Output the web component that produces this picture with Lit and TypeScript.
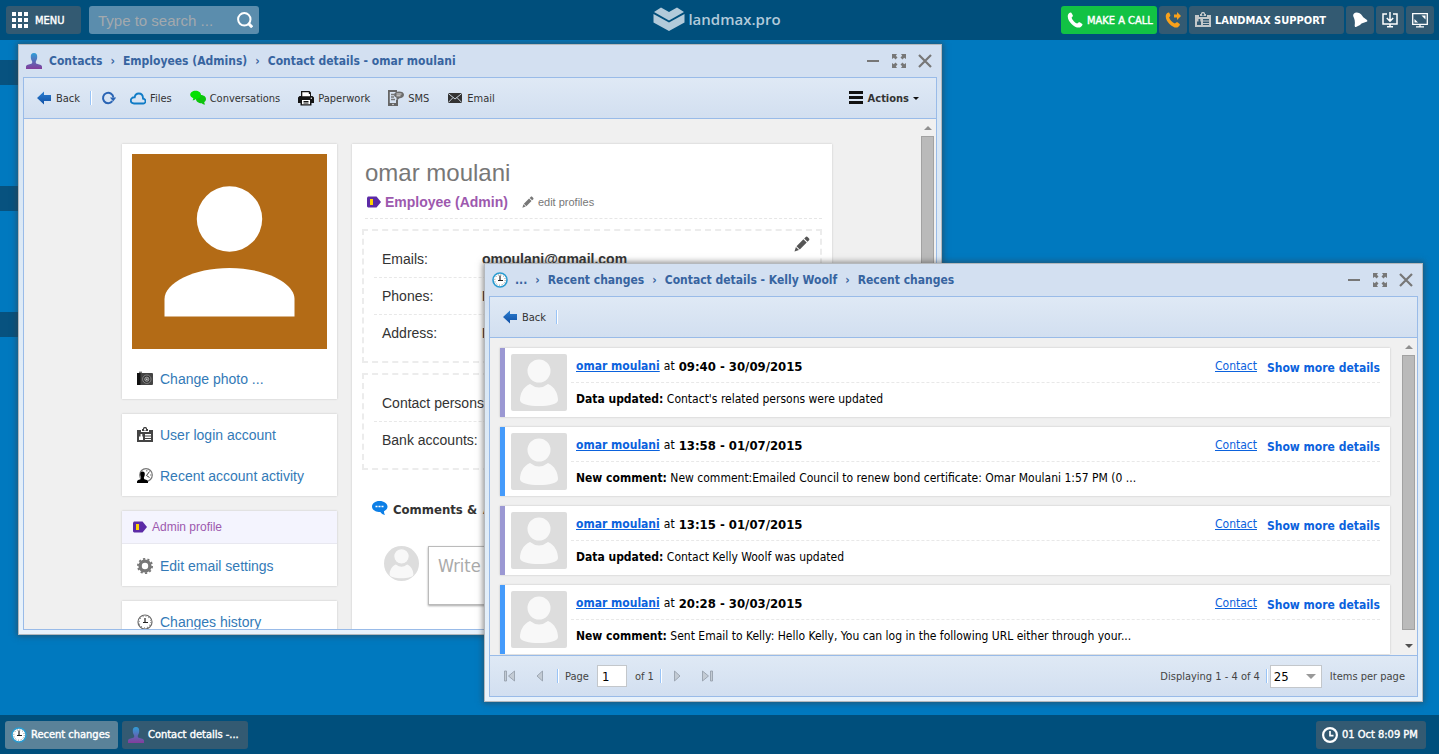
import { LitElement, html, css, svg, nothing } from "lit";
import { customElement, property } from "lit/decorators.js";

const icons: Record<string, unknown> = {
  grid: svg`<g fill="#fff"><path d="M0 0h4v4H0zM6 0h4v4H6zM12 0h4v4h-4zM0 6h4v4H0zM6 6h4v4H6zM12 6h4v4h-4zM0 12h4v4H0zM6 12h4v4H6zM12 12h4v4h-4z"/></g>`,
  search: svg`<g fill="none" stroke="#fff"><circle cx="7.3" cy="7.3" r="6.2" stroke-width="2"/><path d="M11.6 11.6l3.6 3.6" stroke-width="3"/></g>`,
  phone: svg`<path fill="#fff" d="M1 2.8C2 .8 3.4 0 4.3.7l1.5 2.6c.3.9-.6 1.7-1.2 2.2.6 2.5 3.3 5.4 5.7 6 .7-.8 1.700-1.600 2.500-1.200l2.500 1.700c.7.9-.6 2.800-2.300 3.400C8 16.800-.8 8.500 1 2.800z"/>`,
  forward: svg`<g fill="#f9a11b"><path d="M1 2.8C2 .8 3.400 0 4.300.7l1 2.400c.3.9-.6 1.700-1.200 2.200.6 2.800 3.100 5.400 5.900 6.200.7-.8 1.700-1.600 2.500-1.200l2.200 1.700c.7.9-.6 2.800-2.300 3.400C8 16.800-.8 8.500 1 2.800z"/><path d="M9 2.500h3V0l4 4-4 4V5.500H9z"/></g>`,
  badge: svg`<path fill="currentColor" fill-rule="evenodd" d="M0 3h5V2h1V1l1-1h2l1 1v1h1v1h5v12H0zM7 1.500v2h2v-2zM4 3v2h8V3h-1v1H5V3zM3.500 7h1.800v2.500H6V13H2V9.500h1.500zM8 7v1.500h6V7zM8 9.500V11h6V9.500zM8 12v1h6v-1z"/>`,
  bell: svg`<path fill="#fff" d="M2 1.500C4-.5 8.500 1 10 3.500c1.500 2.600 4 3.500 5 4.500.5.8.5 1.400-.5 1.700L9.500 11.500 8 13l-4 2c-1 .4-1.300-.5-1.300-1.500.3-3 .3-5-.7-7.500C1 4 .7 2.800 2 1.500z"/>`,
  download: svg`<path fill="none" stroke="#fff" stroke-width="1.500" d="M5 2H1v10h14V2h-4M8 0v9M4.800 6L8 9.200 11.200 6M8 12v3M5 14.800h6"/>`,
  screen: svg`<g stroke="#fff" stroke-width="1.300" fill="none"><path d="M.7 1.700h14.600v10.600H.7zM8 12v2.500M4 14.800h8"/></g><path fill="#fff" d="M9.500 3.500h4v4zM2.500 7v3.500H6z"/>`,
  person: svg`<linearGradient id="pg" x1="0" y1="0" x2="0" y2="1"><stop offset="0" stop-color="#2f9ed8"/><stop offset="1" stop-color="#843c9b"/></linearGradient><path fill="url(#pg)" d="M8 0c2.300 0 3.300 1.500 3.200 3.700 0 2-.5 3.300-1.200 4.300-.5 1.500-.2 2.400.8 2.800 2 .7 5.200 1 5.200 3V16H0v-2.200c0-2 3.200-2.300 5.200-3 1-.4 1.300-1.300.8-2.800-.7-1-1.200-2.300-1.200-4.300C4.700 1.500 5.700 0 8 0z"/>`,
  clock: svg`<circle cx="8" cy="8" r="7" fill="#fff" stroke="#2a9bd0" stroke-width="1.600"/><circle cx="8" cy="8" r="5.200" fill="none" stroke="#666" stroke-width="1" stroke-dasharray=".8 1.920"/><path d="M8 3.500V8.500M6 8.500H11" stroke="#222" stroke-width="1.200" fill="none"/>`,
  history: svg`<circle cx="8" cy="8" r="7" fill="#fff" stroke="#6b6b6b" stroke-width="1.200"/><circle cx="8" cy="8" r="5.800" fill="none" stroke="#777" stroke-width="1.200" stroke-dasharray=".8 2.230"/><path d="M8 4V8.500M6 8.500H11" stroke="#222" stroke-width="1.200" fill="none"/>`,
  time: svg`<circle cx="8" cy="8" r="6.900" fill="none" stroke="#fff" stroke-width="2.200"/><path d="M8 4v4.700h3.500" stroke="#fff" stroke-width="1.700" fill="none"/>`,
  minus: svg`<path d="M2 8h12" stroke="#777" stroke-width="2"/>`,
  expand: svg`<path fill="#777" d="M1 1h5L4.800 2.800 6.500 4.500 4.500 6.500 2.800 4.800 1 6zM15 1v5l-1.800-1.200L11.500 6.500l-2-2 1.700-1.700L10 1zM1 15v-5l1.800 1.200 1.700-1.700 2 2-1.700 1.700L6 15zM15 15h-5l1.200-1.800-1.700-1.700 2-2 1.700 1.700L15 10z"/>`,
  close: svg`<path d="M2 2l12 12M14 2L2 14" stroke="#777" stroke-width="2.200"/>`,
  back: svg`<linearGradient id="bk" x1="0" y1="0" x2="0" y2="1"><stop offset="0" stop-color="#2d7fd0"/><stop offset="1" stop-color="#0f4fa5"/></linearGradient><path fill="url(#bk)" d="M1 8l7-6.500V5h7v6H8v3.500z"/>`,
  refresh: svg`<path d="M12.300 11.200A5.200 5.200 0 1 1 13.400 7.500" fill="none" stroke="#2a64b4" stroke-width="2"/><path d="M10 7.500h6.200l-3 4z" fill="#2a64b4"/>`,
  cloud: svg`<path d="M4 13.500h9a2.300 2.300 0 0 0 1.500-4.200c-.5-.5-1.200-.8-1.500-.8 0-3-1.800-5-4.300-5C6.500 3.500 5 5 4.700 7.300 2.500 7 .8 8.600.8 10.500c0 1.800 1.400 3 3.200 3z" fill="none" stroke="#0f7bc6" stroke-width="1.800"/>`,
  chat: svg`<path fill="#0cc40c" d="M10.500 5c3.200 0 5.500 1.600 5.500 4 0 1.500-.8 2.500-1.800 3.200.1 1 .5 1.800 1 2.300-1.500 0-2.800-.5-3.500-1.300-3.300 0-5.700-1.600-5.700-4.200 0-2.400 1.800-4 4.500-4z"/><path fill="#04e004" d="M5.500.8c3.200 0 5.500 1.700 5.500 4s-2.300 4.200-5 4.200c-.9 1-2.200 1.300-3.500 1.300.5-.5.8-1.200.8-2C1.500 7.500.2 6.400.2 4.800.2 2.500 2.500.8 5.500.8z"/>`,
  printer: svg`<path fill="#151515" d="M3 1h8.500L13 2.500V6h1.500L16 7.500V13h-2.500v2.500h-11V13H0V7.500L1.500 6H3z"/><path fill="#fff" d="M4.300 2.300h6.500V4H12v2.300H4.300zM4 10h8v4.300H4z"/><path stroke="#151515" d="M5.500 11.500h5M5.500 13h5"/><circle cx="13.300" cy="8.200" r=".7" fill="#fff"/>`,
  sms: svg`<path fill="#666" fill-rule="evenodd" d="M0 0h9v2H1.800v11H8v-3h2v6H0z"/><path d="M3 4.500h3M3 7h3M3 9.500h4" stroke="#777" stroke-width="1.400"/><circle cx="5" cy="14.500" r=".7" fill="#fff"/><path fill="#6c6c6c" d="M11 1.500c3 0 5 1.200 5 3.300C16 7 14 8.300 11.500 8.300L8.500 11V7.700C7 7 6 6.300 6 4.800c0-2 2-3.300 5-3.300z"/><path d="M8.500 4h5M8.500 5.800h4" stroke="#fff" stroke-width=".8"/>`,
  mail: svg`<path fill="#333" d="M1 3h14v10H1z"/><path d="M1.200 3.400L8 9l6.800-5.600M1.200 12.600L6 7.600M14.800 12.600L10 7.600" fill="none" stroke="#dde7f3" stroke-width=".9"/>`,
  bars: svg`<path stroke="#111" stroke-width="3" d="M1 2.500h14M1 7.500h14M1 12.500h14"/>`,
  camera: svg`<rect x="0" y="2" width="16" height="12" rx="1" fill="#444"/><rect x="0" y="2" width="3.500" height="12" fill="#111"/><path d="M2 1.300h3" stroke="#777" stroke-width="1.400"/><circle cx="9.800" cy="8.200" r="4.200" fill="#333" stroke="#999" stroke-width=".8"/><circle cx="9.800" cy="8.200" r="2.100" fill="#555" stroke="#bbb" stroke-width=".8"/><circle cx="9.800" cy="8.200" r=".8" fill="#ddd"/>`,
  activity: svg`<circle cx="9" cy="7" r="6.300" fill="#fff" stroke="#777" stroke-width="1.200"/><path d="M12.500 3.500L9.500 7.500l3 2" stroke="#444" fill="none"/><path d="M9.800 2v1.500M14.500 7H13" stroke="#777"/><path fill="#000" d="M5.500 3.500c1.700 0 2.400 1 2.300 2.700 0 1.300-.4 2.300-.9 3 0 1.500.2 2 1.200 2.400 1.500.5 2.900.9 2.900 2.200V15H0v-1.200c0-1.300 1.400-1.700 2.900-2.200 1-.4 1.200-.9 1.200-2.400-.5-.7-.9-1.700-.9-3 0-1.700.6-2.700 2.300-2.700z"/>`,
  tag: svg`<path fill="#5c2ba6" d="M2 2.500h8.500L15 8l-4.500 5.500H2L1 12.500v-9z"/><path fill="#ffd500" d="M4 5h3v6H4z"/>`,
  gear: svg`<circle cx="8" cy="8" r="4.900" fill="none" stroke="#777" stroke-width="3.400"/><circle cx="8" cy="8" r="7.100" fill="none" stroke="#777" stroke-width="1.800" stroke-dasharray="2.230 2.230"/>`,
  pencil: svg`<path fill="currentColor" d="M11.500 1.200c.8-.8 1.500-.8 2.300 0l1 1c.8.8.8 1.500 0 2.300l-1.300 1.300-3.300-3.300zM9.400 3.300l3.300 3.300-6.900 6.900-3.300-3.300zM1.900 11l3.100 3.100L.5 15.500z"/>`,
  comments: svg`<path fill="#0d7fe6" d="M7.500 1C12 1 15.500 3.500 15.500 6.500c0 2.200-1.400 3.700-3.500 4.700-.1 1.500.3 2.700 1 3.700-2.200-.3-3.700-1.300-4.700-2.900C3.500 12 0 9.800 0 6.500c0-3 3-5.500 7.500-5.500z"/><path stroke="#fff" stroke-width="1.300" stroke-dasharray="2 1" d="M3.500 6.500h8.500"/>`,
  first: svg`<path fill="#c3cbd4" stroke="#919ba7" stroke-width=".8" d="M2.500 3h2v10h-2zM12.500 3v10L6.500 8z"/>`,
  prev: svg`<path fill="#c3cbd4" stroke="#919ba7" stroke-width=".8" d="M10.500 3v10L5 8z"/>`,
  next: svg`<path fill="#c3cbd4" stroke="#919ba7" stroke-width=".8" d="M5.500 3v10L11 8z"/>`,
  last: svg`<path fill="#c3cbd4" stroke="#919ba7" stroke-width=".8" d="M3.500 3v10l6-5zM11.500 3h2v10h-2z"/>`,
};

const icon = (name: string, cls = "") =>
  html`<svg class="icon ${cls}" viewBox="0 0 16 16" aria-hidden="true">${icons[name]}</svg>`;

const silhouette = html`<svg class="avatar" viewBox="0 0 56 57" preserveAspectRatio="xMidYMid slice" aria-hidden="true">
  <rect width="56" height="57" fill="#ddd" />
  <path d="M19 30q9 7 18 0c7 3 10 10 10 16 0 4-9 6-19 6s-19-2-19-6c0-6 3-13 10-16z" fill="#f8f8f8" />
  <circle cx="28" cy="17" r="12.500" fill="#f8f8f8" stroke="#ddd" stroke-width="2" />
</svg>`;

const shared = css`
  *, *::before, *::after { box-sizing: border-box; }
  .icon { width: 16px; height: 16px; flex: none; display: block; }
  .icon.small { width: 12px; height: 12px; }
  button { font: inherit; color: inherit; background: none; border: 0; padding: 0; margin: 0; display: flex; align-items: center; cursor: pointer; white-space: nowrap; }
  .sep { width: 2px; height: 14px; flex: none; border-left: 1px solid #99c4f7; border-right: 1px solid #fff; }
  .avatar { display: block; flex: none; }
`;

@customElement("desktop-window")
class DesktopWindow extends LitElement {
  @property() icon = "person";
  @property({ attribute: false }) trail: string[] = [];

  static styles = [shared, css`
    :host { display: flex; flex-direction: column; border: 1px solid #b4b8bc; background: linear-gradient(#d3e0f1 32px, #d8e6f4 60px, #e8f2fb); box-shadow: 0 0 6px 1px rgba(60, 60, 60, .6); padding: 0 4px 4px; }
    .title { height: 32px; flex: none; display: flex; align-items: center; justify-content: space-between; padding: 0 4px 0 3px; }
    .trail { display: flex; align-items: center; margin: 0; font-size: 12px; font-weight: bold; color: #3764a0; white-space: nowrap; }
    .trail .icon { margin-right: 7px; }
    .arrow { padding: 0 8px; }
    .controls { display: flex; gap: 10px; }
    .frame { flex: 1; min-height: 0; display: flex; flex-direction: column; border: 1px solid #99bbe8; }
    .tools { height: 41px; flex: none; display: flex; align-items: center; border-bottom: 1px solid #99bbe8; background: linear-gradient(#dfe9f5, #d2dff0); padding: 0 17px 0 12px; font-size: 11px; color: #333; }
    .view { flex: 1; min-height: 0; display: flex; background: #f0f0f0; }
    .content { flex: 1; min-width: 0; overflow: hidden; }
    .scroll { width: 17px; flex: none; display: flex; flex-direction: column; align-items: center; padding: 7px 2px; gap: 6px; }
    .thumb { flex: 1; align-self: stretch; background: #bababa; border: 1px solid #a2a2a2; }
    .up, .down { border: 4px solid transparent; border-top-width: 0; border-bottom-color: #8f8f8f; }
    .down { border-top: 4px solid #505050; border-bottom-width: 0; margin-top: 8px; }
  `];

  render() {
    return html`
      <header class="title">
        <h2 class="trail">${icon(this.icon)}${this.trail.map((t, i) => html`${i ? html`<span class="arrow">›</span>` : nothing}<span>${t}</span>`)}</h2>
        <div class="controls">
          <button aria-label="Minimize">${icon("minus")}</button>
          <button aria-label="Maximize">${icon("expand")}</button>
          <button aria-label="Close">${icon("close")}</button>
        </div>
      </header>
      <div class="frame">
        <div class="tools"><slot name="tools"></slot></div>
        <div class="view">
          <div class="content"><slot></slot></div>
          <div class="scroll" aria-hidden="true"><i class="up"></i><i class="thumb"></i><i class="down"></i></div>
        </div>
        <slot name="footer"></slot>
      </div>`;
  }
}

interface Change { kind: "data" | "comment"; when: string; label: string; text: string; }

const changes: Change[] = [
  { kind: "data", when: "09:40 - 30/09/2015", label: "Data updated:", text: "Contact's related persons were updated" },
  { kind: "comment", when: "13:58 - 01/07/2015", label: "New comment:", text: "New comment:Emailed Council to renew bond certificate: Omar Moulani 1:57 PM (0 ..." },
  { kind: "data", when: "13:15 - 01/07/2015", label: "Data updated:", text: "Contact Kelly Woolf was updated" },
  { kind: "comment", when: "20:28 - 30/03/2015", label: "New comment:", text: "Sent Email to Kelly: Hello Kelly, You can log in the following URL either through your..." },
];

@customElement("app-root")
class AppRoot extends LitElement {
  static styles = [shared, css`
    :host { display: flex; flex-direction: column; height: 100vh; overflow: hidden; background: #0079bf; font-family: "DejaVu Sans Condensed", "Noto Sans", sans-serif; font-size: 12px; color: #000; }
    a { color: #0b62dd; }
    .topbar { height: 40px; flex: none; display: grid; grid-template-columns: 1fr auto 1fr; align-items: center; padding: 0 5px 0 6px; background: #004f7c; color: #fff; }
    .left, .right { display: flex; gap: 8px; }
    .right { gap: 2px; justify-content: flex-end; }
    .chip { height: 28px; border-radius: 3px; background: #335a72; color: #fff; font-size: 11px; -webkit-text-stroke: .4px #fff; padding: 0 6px; gap: 7px; }
    .menu { width: 75px; }
    .search { width: 170px; height: 28px; border-radius: 3px; background: #5b8dad; display: flex; align-items: center; padding: 0 6px 0 9px; }
    .search input { flex: 1; min-width: 0; border: 0; padding: 0; background: none; outline: 0; color: #fff; font: 15px "Liberation Sans", sans-serif; }
    .search input::placeholder { color: #a3a9ad; }
    .brand { display: flex; align-items: center; gap: 3px; padding: 0 6px 2px 0; color: #b2cada; font: 600 15px "Open Sans", sans-serif; }
    .brand svg { width: 32px; height: 24px; }
    .call { background: #12c244; width: 96px; gap: 4px; }
    .support { width: 155px; gap: 4px; font-weight: bold; -webkit-text-stroke-width: 0; }
    .support .icon { color: #c4c8ca; }
    .desktop { flex: 1; min-height: 0; position: relative; overflow: hidden; }
    .labels { display: flex; flex-direction: column; gap: 101px; padding-top: 20px; }
    .labels i { width: 90px; height: 25px; background: #07527f; }
    .contact { position: absolute; inset: 4px 497px 80px 18px; }
    .recent { position: absolute; inset: 223px 16px 13px 484px; }
    .tool { gap: 4px; margin-right: 18px; }
    .tool.lead { margin-right: 10px; }
    .tool.lone { margin: 0 14px 0 8px; }
    .actions { margin-left: auto; gap: 4px; font-weight: bold; }
    .caret { border: 3px solid transparent; border-top-color: #111; border-bottom-width: 0; }

    .page { max-width: 721px; margin: 0 auto; padding: 25px 0 0 11px; display: flex; align-items: flex-start; gap: 15px; font-family: "Liberation Sans", sans-serif; font-size: 14px; color: #333; }
    .side { width: 215px; flex: none; display: flex; flex-direction: column; gap: 15px; }
    .card { background: #fff; box-shadow: 0 0 2px rgba(0, 0, 0, .18); }
    .photo { display: block; padding: 10px 10px 0; margin-bottom: 9px; width: 100%; }
    .entry { display: flex; align-items: center; gap: 7px; height: 41px; padding-left: 15px; color: #337ab7; text-decoration: none; }
    .entry .icon { color: #444; }
    .band { display: flex; align-items: center; gap: 4px; height: 33px; margin: 0 0 1px; padding-left: 10px; background: #f4f4fe; border-bottom: 1px solid #e8e8f0; font-size: 12px; font-weight: normal; color: #9d59ae; }
    .profile { flex: 1; min-width: 0; padding: 13px 10px 0; height: 640px; }
    .name { margin: 0 0 0 3px; font-size: 24px; line-height: 32px; font-weight: normal; color: #777; }
    .role { display: flex; align-items: center; height: 30px; margin-left: 3px; border-bottom: 1px dashed #e6e6e6; padding: 0 0 4px 1px; gap: 3px; }
    .role strong { color: #9d59ae; }
    .role button { margin-left: 11px; gap: 4px; font-size: 11px; color: #777; }
    .box { margin: 10px 0; border: 2px dashed #ececec; padding: 9px 10px 10px; position: relative; }
    .box dl { margin: 0; }
    .line { display: grid; grid-template-columns: 100px 1fr; align-items: center; height: 37px; padding-left: 8px; }
    .line + .line { border-top: 1px dashed #e8e8e8; }
    .line dt, .line dd { margin: 0; white-space: nowrap; }
    .line dd { font-weight: bold; }
    .edit { position: absolute; right: 10px; top: 5px; color: #555; }
    .comments { display: flex; align-items: flex-start; gap: 5px; margin: 30px 0 26px 10px; font: bold 13px/20px "DejaVu Sans Condensed", "Noto Sans", sans-serif; color: #333; }
    .comments span { display: flex; gap: 6px; }
    .write { display: flex; gap: 9px; padding: 0 10px 0 22px; }
    .write .avatar { width: 35px; height: 35px; border-radius: 50%; }
    .write textarea { flex: 1; height: 59px; resize: none; border: 1px solid #bbb; box-shadow: 0 1px 2px rgba(0, 0, 0, .35); padding: 8px 9px; font: 18px "DejaVu Sans Condensed", "Noto Sans", sans-serif; }
    .write textarea::placeholder { color: #aaa; }

    .feed { display: flex; flex-direction: column; gap: 10px; padding: 10px 10px 0; margin: 0; list-style: none; }
    .item { display: flex; height: 69px; border-left: 5px solid #9b98d3; background: #fff; box-shadow: 0 0 2px rgba(0, 0, 0, .2); padding-right: 10px; }
    .item.comment { border-left-color: #459bfb; }
    .item .avatar { width: 56px; height: 57px; border-radius: 2px; margin: 6px 4px 6px 6px; }
    .info { flex: 1; min-width: 0; }
    .head { display: flex; align-items: center; height: 35px; border-bottom: 1px dashed #e8e8e8; padding: 2px 0 0 5px; gap: 4px; }
    .who { font-weight: bold; }
    .when { font-size: 13px; }
    .kind { margin-left: auto; }
    .more { color: #0b62dd; font-weight: bold; margin-left: 6px; padding-top: 3px; }
    .what { margin: 0; line-height: 32px; padding-left: 5px; white-space: nowrap; overflow: hidden; text-overflow: ellipsis; }
    .pager { height: 41px; flex: none; display: flex; align-items: center; border-top: 1px solid #99bbe8; background: linear-gradient(#dfe9f5, #d2dff0); padding: 0 12px 0 7px; font-size: 11px; color: #444; white-space: nowrap; }
    .nav { width: 26px; height: 26px; justify-content: center; margin-right: 4px; }
    .pager label { display: flex; align-items: center; gap: 8px; margin: 0 6px; }
    .pager input, .pager select { height: 22px; border: 1px solid #c3c7cb; background: #fff; font: 13px "DejaVu Sans Condensed", "Noto Sans", sans-serif; color: #000; margin: 0; padding: 0 4px; border-radius: 0; }
    .pager input { width: 30px; }
    .pager select { width: 52px; height: 23px; appearance: none; padding: 0 3px; }
    .pick { display: flex; position: relative; }
    .pick .caret { position: absolute; right: 6px; top: 9px; border-width: 5px 5px 0; border-top-color: #999; pointer-events: none; }
    .pager .size { flex-direction: row-reverse; margin: 0 0 0 2px; }
    .total { margin-left: auto; margin-right: 6px; }
    .gap { margin-right: 2px; }

    .taskbar { height: 39px; flex: none; display: flex; align-items: center; gap: 4px; padding: 0 13px 0 5px; background: #004f7c; }
    .task { gap: 4px; }
    .task.on { background: #5a8299; }
    .task.open { width: 113px; }
    .task.wide { width: 126px; }
    .now { margin-left: auto; width: 110px; display: flex; align-items: center; gap: 4px; white-space: nowrap; }
  `];

  private tool(name: string, label: string, cls = "") {
    return html`<button slot="tools" class="tool ${cls}">${icon(name)}${label}</button>`;
  }

  private entry(name: string, label: string) {
    return html`<a class="entry" href="#">${icon(name)}${label}</a>`;
  }

  private contactWindow() {
    return html`
      <desktop-window class="contact" icon="person" .trail=${["Contacts", "Employees (Admins)", "Contact details - omar moulani"]}>
        ${this.tool("back", "Back", "lead")}
        <span slot="tools" class="sep"></span>
        <button slot="tools" class="tool lone" aria-label="Refresh">${icon("refresh")}</button>
        ${this.tool("cloud", "Files")}
        ${this.tool("chat", "Conversations")}
        ${this.tool("printer", "Paperwork")}
        ${this.tool("sms", "SMS")}
        ${this.tool("mail", "Email")}
        <button slot="tools" class="actions">${icon("bars")}Actions<i class="caret"></i></button>
        <div class="page">
          <aside class="side">
            <section class="card">
              <svg class="photo" viewBox="0 0 195 195" role="img" aria-label="omar moulani">
                <rect width="195" height="195" fill="#b36b16" />
                <circle cx="97.500" cy="65" r="32.700" fill="#fff" />
                <path d="M32.500 162.500v-17.500c0-16 29-31 65-31s65 15 65 31v17.500z" fill="#fff" />
              </svg>
              ${this.entry("camera", "Change photo ...")}
            </section>
            <section class="card">
              ${this.entry("badge", "User login account")}
              ${this.entry("activity", "Recent account activity")}
            </section>
            <section class="card">
              <h3 class="band">${icon("tag")}Admin profile</h3>
              ${this.entry("gear", "Edit email settings")}
            </section>
            <section class="card">${this.entry("history", "Changes history")}</section>
          </aside>
          <section class="card profile">
            <h1 class="name">omar moulani</h1>
            <div class="role">${icon("tag")}<strong>Employee (Admin)</strong><button>${icon("pencil", "small")}edit profiles</button></div>
            <div class="box">
              <button class="edit" aria-label="Edit contact">${icon("pencil")}</button>
              <dl>
                <div class="line"><dt>Emails:</dt><dd>omoulani@gmail.com</dd></div>
                <div class="line"><dt>Phones:</dt><dd>None</dd></div>
                <div class="line"><dt>Address:</dt><dd>None</dd></div>
              </dl>
            </div>
            <div class="box">
              <dl>
                <div class="line"><dt>Contact persons:</dt><dd></dd></div>
                <div class="line"><dt>Bank accounts:</dt><dd></dd></div>
              </dl>
            </div>
            <h3 class="comments">${icon("comments")}<span>Comments &amp; <b>Activity</b></span></h3>
            <div class="write">${silhouette}<textarea aria-label="Comment" placeholder="Write a comment ..."></textarea></div>
          </section>
        </div>
      </desktop-window>`;
  }

  private recentWindow() {
    return html`
      <desktop-window class="recent" icon="clock" .trail=${["...", "Recent changes", "Contact details - Kelly Woolf", "Recent changes"]}>
        ${this.tool("back", "Back", "lead")}
        <span slot="tools" class="sep"></span>
        <ul class="feed">
          ${changes.map((c) => html`
            <li class="item ${c.kind}">
              ${silhouette}
              <div class="info">
                <div class="head">
                  <a class="who" href="#">omar moulani</a>at<strong class="when">${c.when}</strong>
                  <a class="kind" href="#">Contact</a>
                  <button class="more">Show more details</button>
                </div>
                <p class="what"><strong>${c.label}</strong> ${c.text}</p>
              </div>
            </li>`)}
        </ul>
        <footer slot="footer" class="pager">
          <button class="nav" aria-label="First page">${icon("first")}</button>
          <button class="nav" aria-label="Previous page">${icon("prev")}</button>
          <span class="sep"></span>
          <label>Page <input value="1" /> of 1</label>
          <span class="sep gap"></span>
          <button class="nav" aria-label="Next page">${icon("next")}</button>
          <button class="nav" aria-label="Last page">${icon("last")}</button>
          <span class="total">Displaying 1 - 4 of 4</span>
          <span class="sep"></span>
          <label class="size">Items per page
            <span class="pick"><select><option>25</option><option>50</option></select><i class="caret"></i></span>
          </label>
        </footer>
      </desktop-window>`;
  }

  render() {
    return html`
      <header class="topbar">
        <div class="left">
          <button class="chip menu">${icon("grid")}MENU</button>
          <label class="search"><input type="text" aria-label="Search" placeholder="Type to search ..." />${icon("search")}</label>
        </div>
        <div class="brand">
          <svg viewBox="0 0 32 24" fill="#b2cada" aria-hidden="true">
            <path d="M1 5L8 .5l8 4.500 8-4.500L31 5l-15 8.500z" />
            <path d="M.5 7L16 15.500 31.500 7v8.500L16 24 .5 15.500z" />
          </svg>
          <span>landmax.pro</span>
        </div>
        <div class="right">
          <button class="chip call">${icon("phone")}MAKE A CALL</button>
          <button class="chip" aria-label="Forward call">${icon("forward")}</button>
          <button class="chip support">${icon("badge")}LANDMAX SUPPORT</button>
          <button class="chip" aria-label="Notifications">${icon("bell")}</button>
          <button class="chip" aria-label="Download">${icon("download")}</button>
          <button class="chip" aria-label="Full screen">${icon("screen")}</button>
        </div>
      </header>
      <main class="desktop">
        <div class="labels" aria-hidden="true"><i></i><i></i><i></i></div>
        ${this.contactWindow()}
        ${this.recentWindow()}
      </main>
      <footer class="taskbar">
        <button class="chip task on open">${icon("clock")}Recent changes</button>
        <button class="chip task wide">${icon("person")}Contact details -...</button>
        <div class="chip now">${icon("time")}01 Oct 8:09 PM</div>
      </footer>`;
  }
}
